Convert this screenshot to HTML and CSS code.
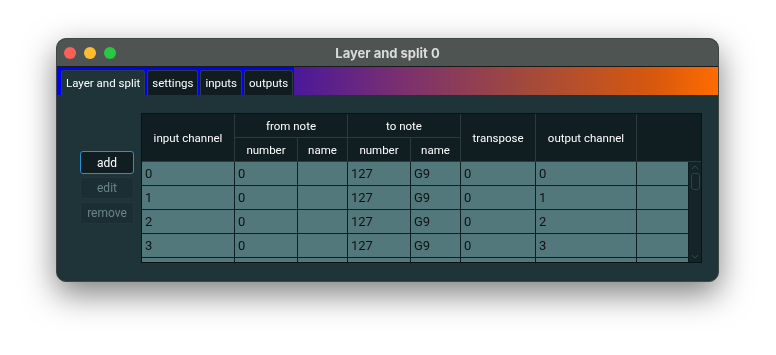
FILE: index.html
```html
<!DOCTYPE html>
<html lang="en">
<head>
<meta charset="UTF-8">
<title>Layer and split 0</title>
<link rel="stylesheet" href="styles.css">
</head>
<body>
<div class="marco">
<div class="ventana">
  <div class="titulo">
    <div class="semaforo">
      <span class="luz roja"></span>
      <span class="luz ambar"></span>
      <span class="luz verde"></span>
    </div>
    <div class="titulo-texto">Layer and split 0</div>
  </div>
  <div class="barra-tabs">
    <div class="tabs">
      <div class="tab activo">Layer and split</div>
      <div class="tab">settings</div>
      <div class="tab">inputs</div>
      <div class="tab">outputs</div>
    </div>
    <div class="degradado"></div>
  </div>
  <div class="cuerpo">
    <div class="botones">
      <button class="boton principal">add</button>
      <button class="boton apagado">edit</button>
      <button class="boton apagado">remove</button>
    </div>
    <div class="tabla-caja">
      <table class="tabla">
        <colgroup>
          <col style="width: 93px">
          <col style="width: 63px">
          <col style="width: 50px">
          <col style="width: 63px">
          <col style="width: 50px">
          <col style="width: 75px">
          <col style="width: 101px">
          <col style="width: 66px">
        </colgroup>
        <thead>
          <tr>
            <th rowspan="2">input channel</th>
            <th colspan="2">from note</th>
            <th colspan="2">to note</th>
            <th rowspan="2">transpose</th>
            <th rowspan="2">output channel</th>
            <th rowspan="2"></th>
          </tr>
          <tr>
            <th>number</th>
            <th>name</th>
            <th>number</th>
            <th>name</th>
          </tr>
        </thead>
        <tbody>
          <tr><td>0</td><td>0</td><td></td><td>127</td><td>G9</td><td>0</td><td>0</td><td></td></tr>
          <tr><td>1</td><td>0</td><td></td><td>127</td><td>G9</td><td>0</td><td>1</td><td></td></tr>
          <tr><td>2</td><td>0</td><td></td><td>127</td><td>G9</td><td>0</td><td>2</td><td></td></tr>
          <tr><td>3</td><td>0</td><td></td><td>127</td><td>G9</td><td>0</td><td>3</td><td></td></tr>
          <tr><td></td><td></td><td></td><td></td><td></td><td></td><td></td><td></td></tr>
        </tbody>
      </table>
      <!-- barra de scroll por encima de la ultima columna -->
      <div class="scroll">
        <svg class="flecha arriba" width="8" height="5" viewBox="0 0 8 5"><path d="M1 4 L4 1 L7 4" fill="none" stroke="#33484c" stroke-width="1"/></svg>
        <div class="pulgar"></div>
        <svg class="flecha abajo" width="8" height="5" viewBox="0 0 8 5"><path d="M1 1 L4 4 L7 1" fill="none" stroke="#33484c" stroke-width="1"/></svg>
      </div>
    </div>
  </div>
</div>
</div>
</body>
</html>
```

FILE: styles.css
```css
html, body {
    height: 100%;
}

body {
    margin: 0;
    padding: 38px 0 0 56px;
    box-sizing: border-box;
    background: #ffffff;
    font-family: Roboto, "Liberation Sans", sans-serif;
}

.marco {
    width: 663px;
    filter: drop-shadow(0 12px 16px rgba(0, 0, 0, 0.5));
}

.ventana {
    width: 663px;
    height: 244px;
    border-radius: 10px;
    overflow: hidden;
    background: #1e3439;
    border: 1px solid #3c4646;
    box-sizing: border-box;
    display: flex;
    flex-direction: column;
}

.titulo {
    height: 27px;
    flex-shrink: 0;
    background: #4d5452;
    border-bottom: 1px solid #1a1a1a;
    display: flex;
    align-items: center;
    position: relative;
}

.semaforo {
    display: flex;
    gap: 8px;
    padding-left: 7px;
}

.luz {
    width: 12px;
    height: 12px;
    border-radius: 50%;
}

.roja { background: #fe5f57; }
.ambar { background: #febc2e; }
.verde { background: #28c840; }

.titulo-texto {
    position: absolute;
    left: 0;
    right: 0;
    text-align: center;
    font-size: 13px;
    font-weight: bold;
    color: #dcdcdc;
    font-family: Inter, "Liberation Sans", sans-serif;
}

.barra-tabs {
    height: 28px;
    flex-shrink: 0;
    display: flex;
}

.tabs {
    background: #0000ff;
    display: flex;
    align-items: flex-end;
    gap: 2px;
    padding: 0 1px 0 4px;
}

.tab {
    height: 24px;
    line-height: 24px;
    padding: 0 4px;
    font-size: 11.5px;
    color: #ffffff;
    background: #101c20;
    border: 1px solid #2c3c40;
    border-bottom: none;
    border-radius: 3px 3px 0 0;
}

.tab.activo {
    background: #1e3439;
}

.degradado {
    flex: 1;
    background: linear-gradient(to right, #4a189a, #7a3070 25%, #a24a3c 55%, #d8580e 85%, #ff6c00);
}

.cuerpo {
    flex: 1;
    display: flex;
    align-items: flex-start;
    padding: 18px 0 0 23px;
}

.botones {
    width: 54px;
    display: flex;
    flex-direction: column;
    gap: 3px;
    margin-top: 38px;
    margin-right: 7px;
}

.boton {
    height: 22px;
    border-radius: 3px;
    font-family: Roboto, "Liberation Sans", sans-serif;
    font-size: 12px;
    padding: 0;
}

.boton.principal {
    height: 23px;
    background: #111e21;
    color: #ffffff;
    border: 1px solid #2a8fd0;
}

.boton.apagado {
    background: #1b2e33;
    color: #6a8589;
    border: 1px solid #22373c;
}

.tabla-caja {
    width: 559px;
    height: 148px;
    border: 1px solid #0a1214;
    overflow: hidden;
    position: relative;
    background: #52787c;
}

.tabla {
    border-collapse: collapse;
    table-layout: fixed;
    width: 561px;
    margin: -1px 0 0 -1px;
}

.tabla th {
    background: #111e21;
    color: #ffffff;
    font-weight: normal;
    font-size: 11.5px;
    height: 23px;
    border: 1px solid #2a3a3d;
    padding: 0;
}

.tabla td {
    height: 23px;
    border: 1px solid #102022;
    padding: 0 0 0 3px;
    font-size: 13px;
    color: #111111;
    background: #52787c;
}

.scroll {
    position: absolute;
    right: 0;
    top: 48px;
    bottom: 0;
    width: 12px;
    background: #142428;
    border-left: 1px solid #0f1c1f;
    display: flex;
    flex-direction: column;
    align-items: center;
}

.flecha.arriba {
    margin-top: 3px;
}

.pulgar {
    width: 7px;
    height: 15px;
    margin-top: 3px;
    border: 1px solid #2c4246;
    border-radius: 3px;
}

.flecha.abajo {
    margin-top: auto;
    margin-bottom: 3px;
}
```
